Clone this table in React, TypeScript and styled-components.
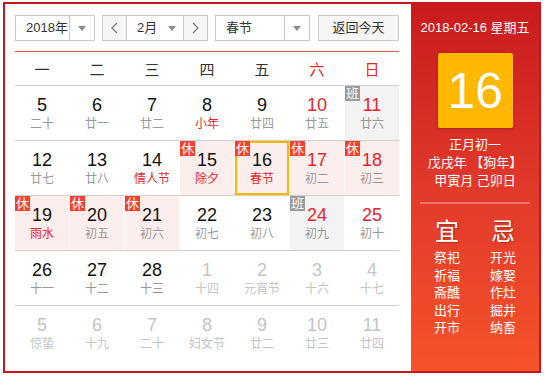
import React from "react"
import styled, { createGlobalStyle } from "styled-components"

const GlobalStyle = createGlobalStyle`
  body {
    margin: 0;
    background: #fff;
    font-family: "Liberation Sans", "Noto Sans CJK SC", sans-serif;
  }
`

const Frame = styled.div`
  margin: 2px 0 0 3px;
  width: 538px;
  height: 371px;
  box-sizing: border-box;
  border: 2px solid #c9171e;
  display: flex;
`

const Main = styled.div`
  width: 384px;
  padding: 11px 12px 0 10px;
`

const Toolbar = styled.div`
  display: flex;
  gap: 7px;
  height: 26px;
  padding-bottom: 10px;
  border-bottom: 1px solid #e8584c;
`

const Select = styled.div<{ $w: number }>`
  width: ${(p) => p.$w}px;
  box-sizing: border-box;
  border: 1px solid #c8c8c8;
  display: flex;
  background: #fff;
  font-size: 13px;
  color: #333;
`

const SelectText = styled.div<{ $pad?: number }>`
  flex: 1;
  padding-left: ${(p) => p.$pad ?? 10}px;
  line-height: 24px;
  white-space: nowrap;
  overflow: hidden;
`

const ArrowBox = styled.div<{ $divider?: boolean; $w?: number }>`
  width: ${(p) => p.$w ?? 24}px;
  border-left: ${(p) => (p.$divider ? "1px solid #c8c8c8" : "none")};
  display: flex;
  align-items: center;
  justify-content: center;

  &::after {
    content: "";
    border-left: 4px solid transparent;
    border-right: 4px solid transparent;
    border-top: 5px solid #8a8a8a;
  }
`

const NavButton = styled.div<{ $side: "left" | "right" }>`
  width: 23px;
  background: #f6f6f6;
  display: flex;
  align-items: center;
  justify-content: center;
  ${(p) => (p.$side === "left" ? "border-right" : "border-left")}: 1px solid #c8c8c8;
`

const TodayButton = styled.div`
  margin-left: auto;
  width: 81px;
  box-sizing: border-box;
  border: 1px solid #c8c8c8;
  background: #f6f6f6;
  font-size: 13px;
  color: #333;
  text-align: center;
  line-height: 24px;
`

const WeekHeader = styled.div`
  display: grid;
  grid-template-columns: repeat(7, 1fr);
  column-gap: 1px;
  height: 33px;
  border-bottom: 1px solid #cfcfcf;
`

const WeekName = styled.div<{ $weekend?: boolean }>`
  text-align: center;
  font-size: 15px;
  line-height: 35px;
  color: ${(p) => (p.$weekend ? "#e5262c" : "#333")};
`

const Row = styled.div<{ $last?: boolean }>`
  display: grid;
  grid-template-columns: repeat(7, 1fr);
  column-gap: 1px;
  height: 54px;
  border-bottom: ${(p) => (p.$last ? "none" : "1px solid #cfcfcf")};
`

type Kind = "rest" | "work" | undefined

const Cell = styled.div<{ $kind: Kind; $selected?: boolean }>`
  position: relative;
  text-align: center;
  padding-top: 9px;
  box-sizing: border-box;
  background: ${(p) =>
    p.$kind === "rest" ? "#fdeeee" : p.$kind === "work" ? "#f3f3f3" : "transparent"};
  box-shadow: ${(p) => (p.$selected ? "inset 0 0 0 2px #ffb400" : "none")};
`

const DayNum = styled.div<{ $tone: string }>`
  font-size: 18px;
  line-height: 20px;
  color: ${(p) => p.$tone};
`

const Lunar = styled.div<{ $tone: string }>`
  margin-top: 1px;
  font-size: 12px;
  line-height: 16px;
  color: ${(p) => p.$tone};
`

const Badge = styled.div<{ $work?: boolean }>`
  position: absolute;
  top: 0;
  left: 0;
  width: 15px;
  height: 15px;
  font-size: 13px;
  line-height: 15px;
  text-align: center;
  color: #fff;
  background: ${(p) => (p.$work ? "#9a9a9a" : "#f2412f")};
`

const Panel = styled.div`
  width: 128px;
  background: linear-gradient(to bottom, #c91b1e 0%, #e1392a 50%, #f5532a 100%);
  color: #fff;
  display: flex;
  flex-direction: column;
  align-items: center;
  padding-top: 15px;
`

const DateLine = styled.div`
  font-size: 13px;
  line-height: 18px;
`

const BigDay = styled.div`
  margin-top: 16px;
  width: 75px;
  height: 75px;
  border-radius: 2px;
  background: #ffb700;
  box-shadow: 0 1px 3px rgba(0, 0, 0, 0.25);
  font-size: 50px;
  line-height: 77px;
  text-align: center;
`

const LunarInfo = styled.div`
  margin-top: 8px;
  font-size: 13px;
  line-height: 18px;
  text-align: center;
`

const Divider = styled.div`
  margin-top: 12px;
  width: 110px;
  height: 2px;
  background: rgba(255, 255, 255, 0.3);
`

const Advice = styled.div`
  margin-top: 13px;
  display: grid;
  grid-template-columns: 56px 56px;
  text-align: center;
`

const AdviceTitle = styled.div`
  font-size: 24px;
  line-height: 30px;
  text-shadow: 1px 1px 2px rgba(0, 0, 0, 0.3);
`

const AdviceList = styled.div`
  margin-top: 2px;
  font-size: 13px;
  line-height: 17.5px;
`

const Chevron = ({ dir }: { dir: "left" | "right" }) => (
  <svg width="7" height="12" viewBox="0 0 7 12">
    <polyline
      points={dir === "left" ? "6,1 1,6 6,11" : "1,1 6,6 1,11"}
      fill="none"
      stroke="#777"
      strokeWidth="1.2"
    />
  </svg>
)

interface Day {
  n: number
  l: string
  other?: boolean
  red?: boolean
  fest?: boolean
  kind?: Kind
  sel?: boolean
}

const d = (n: number, l: string, extra: Partial<Day> = {}): Day => ({ n, l, ...extra })

const rows: Day[][] = [
  [d(5, "二十"), d(6, "廿一"), d(7, "廿二"), d(8, "小年", { fest: true }), d(9, "廿四"), d(10, "廿五", { red: true }), d(11, "廿六", { red: true, kind: "work" })],
  [d(12, "廿七"), d(13, "廿八"), d(14, "情人节", { fest: true }), d(15, "除夕", { fest: true, kind: "rest" }), d(16, "春节", { fest: true, kind: "rest", sel: true }), d(17, "初二", { red: true, kind: "rest" }), d(18, "初三", { red: true, kind: "rest" })],
  [d(19, "雨水", { fest: true, kind: "rest" }), d(20, "初五", { kind: "rest" }), d(21, "初六", { kind: "rest" }), d(22, "初七"), d(23, "初八"), d(24, "初九", { red: true, kind: "work" }), d(25, "初十", { red: true })],
  [d(26, "十一"), d(27, "十二"), d(28, "十三"), d(1, "十四", { other: true }), d(2, "元宵节", { other: true }), d(3, "十六", { other: true }), d(4, "十七", { other: true })],
  [d(5, "惊蛰", { other: true }), d(6, "十九", { other: true }), d(7, "二十", { other: true }), d(8, "妇女节", { other: true }), d(9, "廿二", { other: true }), d(10, "廿三", { other: true }), d(11, "廿四", { other: true })],
]

const weekNames = ["一", "二", "三", "四", "五", "六", "日"]
const yi = ["祭祀", "祈福", "斋醮", "出行", "开市"]
const ji = ["开光", "嫁娶", "作灶", "掘井", "纳畜"]

const RED = "#e5262c"
const GRAY = "#999"
const FADED = "#c4c4c4"

const App = () => {
  return (
    <>
      <GlobalStyle />
      <Frame>
        <Main>
          <Toolbar>
            <Select $w={80}>
              <SelectText>2018年</SelectText>
              <ArrowBox $divider />
            </Select>
            <Select $w={106}>
              <NavButton $side="left">
                <Chevron dir="left" />
              </NavButton>
              <SelectText>2月</SelectText>
              <ArrowBox $w={22} />
              <NavButton $side="right">
                <Chevron dir="right" />
              </NavButton>
            </Select>
            <Select $w={95}>
              <SelectText>春节</SelectText>
              <ArrowBox $divider />
            </Select>
            <TodayButton>返回今天</TodayButton>
          </Toolbar>
          <WeekHeader>
            {weekNames.map((w, i) => (
              <WeekName key={w} $weekend={i >= 5}>
                {w}
              </WeekName>
            ))}
          </WeekHeader>
          {rows.map((row, ri) => (
            <Row key={ri} $last={ri === rows.length - 1}>
              {row.map((day, ci) => (
                <Cell key={ci} $kind={day.kind} $selected={day.sel}>
                  {day.kind && <Badge $work={day.kind === "work"}>{day.kind === "work" ? "班" : "休"}</Badge>}
                  <DayNum $tone={day.other ? FADED : day.red ? RED : "#111"}>{day.n}</DayNum>
                  <Lunar $tone={day.other ? FADED : day.fest ? RED : GRAY}>{day.l}</Lunar>
                </Cell>
              ))}
            </Row>
          ))}
        </Main>
        <Panel>
          <DateLine>2018-02-16 星期五</DateLine>
          <BigDay>16</BigDay>
          <LunarInfo>
            <div>正月初一</div>
            <div>戊戌年 【狗年】</div>
            <div>甲寅月 己卯日</div>
          </LunarInfo>
          <Divider />
          <Advice>
            <div>
              <AdviceTitle>宜</AdviceTitle>
              <AdviceList>
                {yi.map((t) => (
                  <div key={t}>{t}</div>
                ))}
              </AdviceList>
            </div>
            <div>
              <AdviceTitle>忌</AdviceTitle>
              <AdviceList>
                {ji.map((t) => (
                  <div key={t}>{t}</div>
                ))}
              </AdviceList>
            </div>
          </Advice>
        </Panel>
      </Frame>
    </>
  )
}

export default App
